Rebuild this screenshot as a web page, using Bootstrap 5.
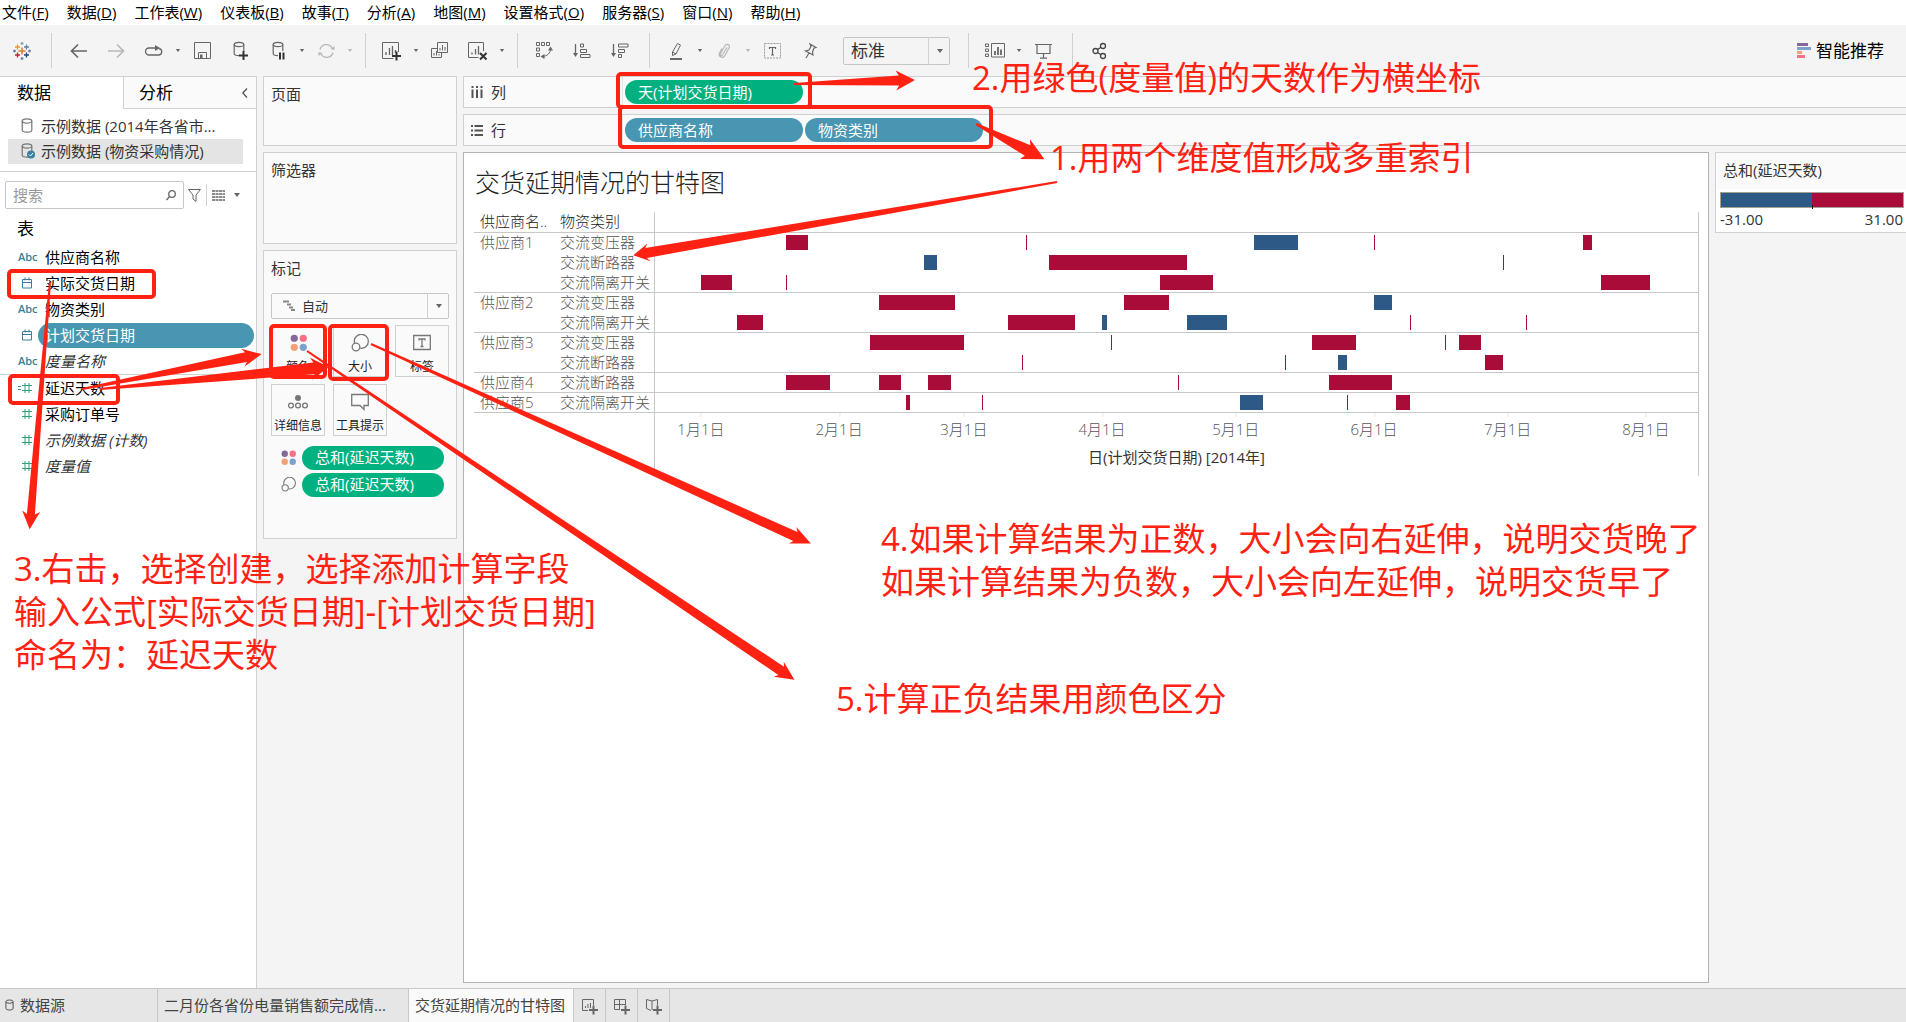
<!DOCTYPE html>
<html lang="zh-CN">
<head>
<meta charset="utf-8">
<meta name="viewport" content="width=device-width, initial-scale=1">
<title>交货延期情况的甘特图</title>
<link href="https://cdn.jsdelivr.net/npm/bootstrap@5.3.0/dist/css/bootstrap.min.css" rel="stylesheet">
<style>
:root{--ln:#d0d0d0;--blue:#4996b2;--green:#00b180;--red:#ff2112;--ic:#666}
body{font-family:"Open Sans","Noto Sans CJK SC",sans-serif;font-size:15px;line-height:24px;color:#333;background:#f4f4f4;height:100vh;position:relative;overflow:hidden}
svg{display:block;flex:none;overflow:visible}
button{background:none;border:0;padding:0;color:inherit}
.menubar{height:25px;padding-left:2px;gap:18px}
.menubar a{color:#000;text-decoration:none}
.toolstrip{height:51px;padding-left:3px;color:var(--ic)}
.tool{width:38px;height:32px;display:flex;align-items:center;justify-content:center}
.drop{width:10px;height:32px;display:flex;align-items:center;justify-content:center}
.faint{color:#b8b8b8}
.rule{width:1px;height:35px;background:var(--ln);margin:0 7px 0 10px}
.pick{appearance:none;background:transparent;border:1px solid #c6c6c6;color:#333;width:100%;border-radius:2px}
.pickwrap{position:relative}
.pickwrap .arrow{position:absolute;right:0;top:0;bottom:0;width:22px;border-left:1px solid var(--ln);display:flex;align-items:center;justify-content:center;pointer-events:none;color:var(--ic)}
.fit{width:107px;margin:0 8px 0 14px}
.fit .pick{height:28px;font-size:17px;line-height:24px;padding:0 7px}
.showme{color:#000;font-size:17px;gap:5px;padding-right:22px}
.side{width:257px;background:#fff;border-right:1px solid var(--ln);border-top:1px solid var(--ln)}
.side-tabs{height:32px;font-size:17px;color:#000}
.side-tabs button{text-align:left}
.tab-a{width:123px;padding-left:17px}
.tab-b{border-left:1px solid var(--ln);border-bottom:1px solid var(--ln);background:#fafafa;padding:0 8px 0 15px}
.sources{padding:5px 0 7px 8px;border-bottom:1px solid var(--ln)}
.src{height:25px;width:235px;padding:0 0 2px 13px;gap:8px;color:#333}
.src.on{background:#e4e4e4}
.src svg{color:#777}
.find{padding:9px 5px 0;color:var(--ic)}
.findbox{width:179px;height:28px;border:1px solid #c6c6c6;border-radius:2px;padding:0 7px}
.findbox input{border:0;outline:0;width:140px;padding:0;background:none}
.findbox input::placeholder{color:#999}
.split{width:1px;height:22px;background:var(--ln);margin:0 5px}
.tbl-head{font-size:17px;color:#000;padding-left:17px;margin:8px 0 0;line-height:24px;height:27px;font-weight:400}
.field{height:26px;color:#000;width:100%;padding-left:18px;text-align:left}
.field svg,.field .abc{width:18px;color:#3a7f9b;flex:none}
.abc{font-size:11px;font-weight:600;line-height:24px}
.field .nm{flex:1;padding-left:7px;margin:0 2px;height:25px;border-radius:13px;line-height:24px}
.field.on .nm{background:var(--blue);color:#fff}
.field.it .nm{font-style:italic;color:#333}
.field.num svg{color:#2f9e78}
.fieldline{border-top:1px solid var(--ln)}
.cards{width:206px;padding:0 6px;gap:6px}
.shelfcard{border:1px solid var(--ln);background:#fafafa;padding:5px 7px}
.shelfcard h2{font-size:15px;line-height:24px;margin:0;font-weight:400}
.c1{height:70px}.c2{height:92px}.c3{height:289px}
.marktype{margin-top:13px}
.marktype .pick{height:26px;font-size:13px;padding:0 30px}
.marktype .kind{position:absolute;left:12px;top:7px;pointer-events:none;color:#888}
.markgrid{display:grid;grid-template-columns:repeat(3,54px);justify-content:space-between;row-gap:7px;margin-top:6px}
.mbtn{height:52px;border:1px solid var(--ln);display:flex;flex-direction:column;align-items:center;justify-content:space-between;font-size:12px;line-height:18px;color:#222;padding-top:8px;white-space:nowrap}
.mbtn svg{color:#777}
.encs{margin-top:8px;padding-left:10px}
.enc{height:27px;gap:6px;color:#777}
.pilltag{height:24px;border-radius:12px;color:#fff;line-height:23px;padding-left:13px;text-align:left;background:var(--blue)}
.pilltag.g{background:var(--green)}
.enc .pilltag{width:142px}
.workarea,.workrow{min-width:0;min-height:0}
.shelf{height:32px;border:1px solid var(--ln);border-right:0;background:#fafafa;margin-bottom:6px}
.shelf .cap{width:159px;border-right:1px solid #e0e0e0;padding-left:7px;gap:8px;height:100%;color:#333}
.shelf .pilltag{width:178px}
.pills{gap:2px;padding-left:2px}
.sheet{background:#fff;border:1px solid #b3b3b3;padding:12px 9px 0 10px;margin-bottom:5px}
.sheet h1{font-size:25px;line-height:34px;font-weight:300;margin:0 0 13px 1px;color:#222}
.gantt{width:100%;table-layout:fixed;border-collapse:separate;border-spacing:0;font-weight:300;color:#555}
.gantt .w1{width:80px}.gantt .w2{width:100px}
.gantt th,.gantt td{padding:0 0 0 6px;font-weight:300;height:20px;line-height:19px;vertical-align:top;white-space:nowrap;text-align:left}
.gantt thead th{height:21px;color:#222;border-bottom:1px solid #c8c8c8}
.gantt .plot{border-left:1px solid #c8c8c8;border-right:1px solid #c8c8c8;position:relative;padding:0}
.gantt .end>*,.gantt th[scope=rowgroup]{border-bottom:1px solid #c8c8c8}
.bar{position:absolute;top:2px;height:15px;background:#a90c38;min-width:1px}
.bar.neg{background:#2c5985}
.gantt .axis td{height:63px}
.tick{position:absolute;top:0;padding-top:5px;transform:translateX(-50%);line-height:22px}
.tick::before{content:"";position:absolute;left:50%;top:0;height:4px;width:1px;background:#e4e4e4}
.axtitle{padding-top:32px;text-align:center;color:#333;line-height:24px;font-weight:400}
.legend-col{width:197px;padding-left:6px}
.legend{border:1px solid var(--ln);border-right:0;background:#fff;height:81px}
.legend h2{font-size:15px;font-weight:400;line-height:24px;padding:5px 0 7px 7px;margin:0;background:#fafafa}
.ramp{height:16px;margin:3px 2px 0 4px;border:1px solid #a49f93;background:linear-gradient(90deg,#2c5985 50%,#a90c38 50%);position:relative}
.ramp::after{content:"";position:absolute;left:50%;bottom:-2px;width:1px;height:4px;background:#000}
.ends{padding:0 3px 0 4px;line-height:22px}
.foot{height:34px;background:#e6e6e6;border-top:1px solid #c8c8c8;color:#444}
.foot button{border-right:1px solid #c8c8c8;text-align:left;padding:0 6px 1px}
.foot .ds{width:158px;padding-left:5px;gap:6px}
.foot .s1{width:251px}
.foot .s2{width:165px;background:#fafafa}
.foot .nw{width:32px;padding:3px 0 0 8px;color:#666}
.notes{position:absolute;inset:0;pointer-events:none;z-index:5}
.note{position:absolute;margin:0;color:var(--red);font-size:33px;line-height:43px;white-space:nowrap}
.n1{left:1050px;top:136px}.n2{left:972px;top:56px}.n3{left:14px;top:547px}.n4{left:881px;top:517px}.n5{left:836px;top:677px}
</style>
<script src="https://cdn.jsdelivr.net/npm/bootstrap@5.3.0/dist/js/bootstrap.bundle.min.js"></script>
</head>
<body class="d-flex flex-column">
<svg width="0" height="0" class="position-absolute" aria-hidden="true">
<symbol id="caret" viewBox="0 0 8 6"><path d="M1 1h6L4 5z" fill="currentColor"/></symbol>
<symbol id="cyl" viewBox="0 0 12 15"><g fill="none" stroke="currentColor" stroke-width="1.2"><ellipse cx="6" cy="3" rx="4.8" ry="2.2"/><path d="M1.2 3v9c0 1.2 2 2.2 4.8 2.2s4.800-1 4.800-2.200V3"/></g></symbol>
<symbol id="cal" viewBox="0 0 18 14"><path d="M4.500 3.500h9v8.500h-9zM4.500 6.500h9M7 1.500v3M11 1.500v3" fill="none" stroke="currentColor"/></symbol>
<symbol id="hash" viewBox="0 0 18 14"><path d="M4 4.500h10M4 9.500h10M7 2v10M11 2v10" fill="none" stroke="currentColor"/></symbol>
<symbol id="dots" viewBox="0 0 16 16"><circle cx="4" cy="4" r="3.400" fill="#86689a"/><circle cx="12.500" cy="4" r="3.400" fill="#fb6f86"/><circle cx="4" cy="12.500" r="3.400" fill="#f0a276"/><circle cx="12.500" cy="12.500" r="3.400" fill="#7ea2cb"/></symbol>
<symbol id="size" viewBox="0 0 18 18"><g fill="none" stroke="currentColor" stroke-width="1.300"><path d="M3.600 9.200a7 7 0 1 1 5.600 5"/><circle cx="5" cy="13" r="3.800"/></g></symbol>
</svg>

<nav class="menubar d-flex bg-white align-items-start" aria-label="菜单">
<a href="#">文件(<u>F</u>)</a><a href="#">数据(<u>D</u>)</a><a href="#">工作表(<u>W</u>)</a><a href="#">仪表板(<u>B</u>)</a><a href="#">故事(<u>T</u>)</a><a href="#">分析(<u>A</u>)</a><a href="#">地图(<u>M</u>)</a><a href="#">设置格式(<u>O</u>)</a><a href="#">服务器(<u>S</u>)</a><a href="#">窗口(<u>N</u>)</a><a href="#">帮助(<u>H</u>)</a>
</nav>

<div class="toolstrip d-flex align-items-center" role="toolbar" aria-label="工具栏">
<button class="tool" aria-label="Tableau"><svg width="18" height="18" viewBox="0 0 18 18" fill="none" stroke-width="1.300"><path d="M9 5.500v7M5.500 9h7" stroke="#e8762d" stroke-width="1.500"/><path d="M4.500 2.500v5M2 5h5" stroke="#e89540"/><path d="M13.500 2.500v5M11 5h5" stroke="#5b879b"/><path d="M4.500 10.500v5M2 13h5" stroke="#c72035"/><path d="M13.500 10.500v5M11 13h5" stroke="#1f457e"/><path d="M9 0v3M7.500 1.500h3" stroke="#7aa2b5"/><path d="M9 15v3M7.500 16.500h3M16.500 7.500v3M15 9h3M1.500 7.500v3M0 9h3" stroke="#7b7fae"/></svg></button>
<span class="rule"></span>
<button class="tool" aria-label="撤消"><svg width="17" height="16" fill="none" stroke="currentColor" stroke-width="1.700"><path d="M1 8h16M8 1.500L1.500 8 8 14.500"/></svg></button>
<button class="tool faint" aria-label="重做"><svg width="17" height="16" fill="none" stroke="currentColor" stroke-width="1.700"><path d="M0 8h16M9 1.500L15.500 8 9 14.500"/></svg></button>
<button class="tool" aria-label="恢复"><svg width="18" height="12" fill="none" stroke="currentColor" stroke-width="1.300"><path d="M5 10H4a3.500 3.500 0 0 1 0-7h9M14 3.500a3.300 3.300 0 0 1 0 6.500H4"/><path d="M10 0l5 3-5 3z" fill="currentColor" stroke="none"/></svg></button>
<button class="drop" aria-label="更多"><svg width="6" height="5"><use href="#caret"/></svg></button>
<button class="tool" aria-label="保存"><svg width="17" height="17" fill="none" stroke="currentColor"><path d="M.5.500h16v16H.5zM4.500 16v-5.500h8V16" /><path d="M6 12.500h2.500V16H6z" fill="currentColor" stroke="none"/></svg></button>
<button class="tool" aria-label="新建数据源"><svg width="15" height="19"><use href="#cyl" width="12" height="16"/><path d="M6 10h9v9H6z" fill="#f4f4f4"/><path d="M10.500 10v9M6 14.500h9" stroke="#333" stroke-width="2"/></svg></button>
<button class="tool" aria-label="暂停更新"><svg width="13" height="19"><use href="#cyl" width="12" height="16"/><path d="M6 10h9v9H6z" fill="#f4f4f4"/><path d="M8 11.500v7M11.500 11.500v7" stroke="#333" stroke-width="2"/></svg></button>
<button class="drop" aria-label="更多"><svg width="6" height="5"><use href="#caret"/></svg></button>
<button class="tool faint" aria-label="刷新"><svg width="17" height="16" fill="none" stroke="currentColor" stroke-width="1.300"><path d="M2 6.500a6.500 6.500 0 0 1 12-1.500M15 9.500a6.500 6.500 0 0 1-12 1.500"/><path d="M16.500 3v4l-4-1zM.500 13V9l4 1z" fill="currentColor" stroke="none"/></svg></button>
<button class="drop faint" aria-label="更多"><svg width="6" height="5"><use href="#caret"/></svg></button>
<span class="rule"></span>
<button class="tool" aria-label="新建工作表"><svg width="20" height="18" fill="none" stroke="currentColor"><path d="M16.500 10V.5H.5v16h11"/><path d="M4 13v-3M7.500 13V6M10.500 13V4M13.500 11V8" stroke-width="1.300"/><path d="M14.500 9.500v9M10 14h9" stroke="#333" stroke-width="2"/></svg></button>
<button class="drop" aria-label="更多"><svg width="6" height="5"><use href="#caret"/></svg></button>
<button class="tool" aria-label="复制"><svg width="18" height="17" fill="none" stroke="currentColor"><path d="M6.500.5h10v10h-10zM6.500 6.500h-6v9h10v-5M9 8.500V6M11.500 8.500V3M14 8.500V5M3 13.500V11M5.500 13.500V9M8 13.500V12"/></svg></button>
<button class="tool" aria-label="清除工作表"><svg width="20" height="18" fill="none" stroke="currentColor"><path d="M15.500 9V.5H.5v15h10"/><path d="M4 12.500v-2M7.500 12.500V7M10.500 12.500V4" stroke-width="1.300"/><path d="M12 11l6.500 6.500M18.500 11L12 17.500" stroke="#333" stroke-width="2"/></svg></button>
<button class="drop" aria-label="更多"><svg width="6" height="5"><use href="#caret"/></svg></button>
<span class="rule"></span>
<button class="tool" aria-label="交换行和列"><svg width="17" height="17" fill="none" stroke="currentColor"><path d="M.5.500h3v3h-3zM5.500.500h3v3h-3zM10.500.500h3v3h-3zM.5 6h3v3h-3zM.5 11.500h3v3h-3zM14.500 7c0 4-3 7-8 7.500"/><path d="M14.500 4.500l2.500 4h-5zM4.500 14.500l4-2.500v5z" fill="currentColor" stroke="none"/></svg></button>
<button class="tool" aria-label="升序"><svg width="18" height="16" fill="none" stroke="currentColor"><path d="M2.500 1v11" stroke-width="1.300"/><path d="M0 10h5l-2.500 4z" fill="currentColor" stroke="none"/><path d="M7.500 1h3v3h-3zM7.500 6.500h6v3h-6zM7.500 11.500h9.500v3H7.500z"/></svg></button>
<button class="tool" aria-label="降序"><svg width="18" height="16" fill="none" stroke="currentColor"><path d="M2.500 1v11" stroke-width="1.300"/><path d="M0 10h5l-2.500 4z" fill="currentColor" stroke="none"/><path d="M7.500 1h9.500v3H7.500zM7.500 6.500h6v3h-6zM7.500 11.500h3v3h-3z"/></svg></button>
<span class="rule"></span>
<button class="tool" aria-label="突出显示"><svg width="12" height="18" fill="none" stroke="currentColor"><path d="M2.500 10L7.500 1.500 10.500 3 6 12l-3.500 1.500zM2.500 10L6 12"/><path d="M0 17h12" stroke-width="2"/></svg></button>
<button class="drop" aria-label="更多"><svg width="6" height="5"><use href="#caret"/></svg></button>
<button class="tool faint" aria-label="分组"><svg width="13" height="16" fill="none" stroke="currentColor" stroke-width="1.200"><path d="M9 4.500L4.500 12c-1 1.500-3 .5-2-1.300L7 2.500c1.500-2.500 5.500-.5 4.200 2L7 12.500C5 16 0 14 1.500 10L4 5.500"/></svg></button>
<button class="drop faint" aria-label="更多"><svg width="6" height="5"><use href="#caret"/></svg></button>
<button class="tool" aria-label="显示标记标签"><svg width="17" height="16" fill="none" stroke="currentColor"><path d="M.5.500h16v14.500H.5z" stroke="#999" stroke-dasharray="2 1"/><path d="M5.500 6V4.500h6V6M8.500 4.500V12M7 12h3" stroke-width="1.200"/></svg></button>
<button class="tool" aria-label="固定轴"><svg width="13" height="16" fill="none" stroke="currentColor" stroke-width="1.200"><path d="M6 1l6 3.500-2 .5-1.500 4 .5 3L1.500 8 5 7l2-3.500zM5 10L2 15"/></svg></button>
<div class="pickwrap fit"><select class="pick" aria-label="适合"><option>标准</option></select><span class="arrow"><svg width="8" height="6"><use href="#caret"/></svg></span></div>
<span class="rule"></span>
<button class="tool" aria-label="显示/隐藏卡"><svg width="20" height="15" fill="none" stroke="currentColor"><path d="M.5 1h3v2.500h-3zM.5 6h3v2.500h-3zM.5 11h3v2.500h-3zM6.500.500h13v13.500h-13z"/><path d="M10 12V8M13 12V4M16 12V6.500" stroke-width="1.800"/></svg></button>
<button class="drop" aria-label="更多"><svg width="6" height="5"><use href="#caret"/></svg></button>
<button class="tool" aria-label="演示模式"><svg width="17" height="16" fill="none" stroke="currentColor" stroke-width="1.200"><path d="M0 1.500h17M2 1.500v9h13v-9M8.500 10.500V15M5 15.200h7"/></svg></button>
<span class="rule"></span>
<button class="tool" aria-label="共享"><svg width="15" height="16" fill="none" stroke="#444" stroke-width="1.300"><circle cx="3.500" cy="8" r="2.500"/><circle cx="11" cy="3" r="2.500"/><circle cx="11" cy="13" r="2.500"/><path d="M5.500 6.500l3.500-2.300M5.500 9.500L9 11.800"/></svg></button>
<button class="showme d-flex align-items-center ms-auto"><svg width="14" height="16"><path fill="#86689a" d="M0 0h11v3H0z"/><path fill="#7ea2cb" d="M0 4h14v3H0z"/><path fill="#f0a276" d="M0 8h5v3H0z"/><path fill="#fb6f86" d="M0 12h8v3H0z"/></svg>智能推荐</button>
</div>

<main class="d-flex flex-grow-1 workrow">
<aside class="side flex-shrink-0">
<div class="side-tabs d-flex"><button class="tab-a">数据</button><button class="tab-b flex-grow-1 d-flex align-items-center justify-content-between">分析<svg width="6" height="10" fill="none" stroke="#555" stroke-width="1.300"><path d="M5 .5L.8 5 5 9.500"/></svg></button></div>
<div class="sources">
<button class="src d-flex align-items-center"><svg width="12" height="15"><use href="#cyl"/></svg>示例数据 (2014年各省市...</button>
<button class="src on d-flex align-items-center"><svg width="12" height="15"><use href="#cyl"/><circle cx="10" cy="11.500" r="4" fill="#3a7f9b"/><path d="M8 11.500l1.500 1.500 2.500-3" fill="none" stroke="#fff"/></svg>示例数据 (物资采购情况)</button>
</div>
<div class="find d-flex align-items-center">
<div class="findbox d-flex align-items-center justify-content-between"><input type="text" placeholder="搜索" aria-label="搜索"><svg width="10" height="11" fill="none" stroke="currentColor" stroke-width="1.300"><circle cx="6" cy="4" r="3.300"/><path d="M3.600 6.500L.5 10"/></svg></div>
<button class="ms-1" aria-label="筛选"><svg width="13" height="13" fill="none" stroke="currentColor"><path d="M.5.500h12L8 6v6.500L5 10V6z"/></svg></button>
<span class="split"></span>
<button class="d-flex align-items-center gap-2" aria-label="查看方式"><svg width="13" height="11"><path d="M0 1h13M0 4h13M0 7h13M0 10h13" stroke="currentColor" stroke-width="1.500" stroke-dasharray="3 .5"/></svg><svg width="8" height="6"><use href="#caret"/></svg></button>
</div>
<h2 class="tbl-head">表</h2>
<button class="field d-flex align-items-center"><span class="abc">Abc</span><span class="nm">供应商名称</span></button>
<button class="field d-flex align-items-center"><svg width="18" height="14"><use href="#cal"/></svg><span class="nm">实际交货日期</span></button>
<button class="field d-flex align-items-center"><span class="abc">Abc</span><span class="nm">物资类别</span></button>
<button class="field on d-flex align-items-center"><svg width="18" height="14"><use href="#cal"/></svg><span class="nm">计划交货日期</span></button>
<button class="field it d-flex align-items-center"><span class="abc">Abc</span><span class="nm">度量名称</span></button>
<div class="fieldline"></div>
<button class="field num d-flex align-items-center"><svg width="18" height="14"><use href="#hash"/><path d="M0 5.500h3M0 8.500h3" stroke="currentColor"/></svg><span class="nm">延迟天数</span></button>
<button class="field num d-flex align-items-center"><svg width="18" height="14"><use href="#hash"/></svg><span class="nm">采购订单号</span></button>
<button class="field num it d-flex align-items-center"><svg width="18" height="14"><use href="#hash"/></svg><span class="nm">示例数据 (计数)</span></button>
<button class="field num it d-flex align-items-center"><svg width="18" height="14"><use href="#hash"/></svg><span class="nm">度量值</span></button>
</aside>

<div class="cards d-flex flex-column flex-shrink-0">
<section class="shelfcard c1"><h2>页面</h2></section>
<section class="shelfcard c2"><h2>筛选器</h2></section>
<section class="shelfcard c3"><h2>标记</h2>
<div class="pickwrap marktype"><select class="pick" aria-label="标记类型"><option>自动</option></select><svg class="kind" width="13" height="11" fill="none" stroke="currentColor" stroke-width="2"><path d="M0 1.500h6M4 4.500h4M6 7.500h4M8 10h4"/></svg><span class="arrow"><svg width="8" height="6"><use href="#caret"/></svg></span></div>
<div class="markgrid">
<button class="mbtn"><svg width="17" height="17"><use href="#dots"/></svg>颜色</button>
<button class="mbtn"><svg width="18" height="18"><use href="#size"/></svg>大小</button>
<button class="mbtn"><svg width="18" height="17" fill="none" stroke="currentColor" stroke-width="1.300"><path d="M.7 1.500h16.600v14H.7zM6 6.500V5h6v1.500M9 5v7.500M7.500 12.500h3"/></svg>标签</button>
<button class="mbtn"><svg width="20" height="17" fill="none" stroke="currentColor" stroke-width="1.300"><circle cx="10" cy="5" r="3" fill="currentColor" stroke="none"/><circle cx="3" cy="12.500" r="2.400"/><circle cx="10" cy="12.500" r="2.400"/><circle cx="17" cy="12.500" r="2.400"/></svg>详细信息</button>
<button class="mbtn"><svg width="18" height="17" fill="none" stroke="currentColor" stroke-width="1.300"><path d="M.7 1.500h16.600v11H13v4l-4-4H.7z"/></svg>工具提示</button>
</div>
<div class="encs">
<div class="enc d-flex align-items-center"><svg width="15" height="15"><use href="#dots"/></svg><button class="pilltag g">总和(延迟天数)</button></div>
<div class="enc d-flex align-items-center"><svg width="15" height="15"><use href="#size"/></svg><button class="pilltag g">总和(延迟天数)</button></div>
</div>
</section>
</div>

<div class="d-flex flex-column flex-grow-1 workarea">
<div class="shelf d-flex align-items-center flex-shrink-0"><div class="cap d-flex align-items-center"><svg width="12" height="12"><path d="M1.500 3.500V12M6 3.500V12M10.500 3.500V12M1.500 0v2M6 0v2M10.500 0v2" stroke="#555" stroke-width="2"/></svg>列</div><div class="pills d-flex"><button class="pilltag g">天(计划交货日期)</button></div></div>
<div class="shelf d-flex align-items-center flex-shrink-0"><div class="cap d-flex align-items-center"><svg width="12" height="11"><path d="M3.500 1H12M3.500 5.500H12M3.500 10H12M0 1h2M0 5.500h2M0 10h2" stroke="#555" stroke-width="1.800"/></svg>行</div><div class="pills d-flex"><button class="pilltag">供应商名称</button><button class="pilltag">物资类别</button></div></div>
<div class="d-flex flex-grow-1">
<section class="sheet flex-grow-1">
<h1>交货延期情况的甘特图</h1>
<table class="gantt">
<colgroup><col class="w1"><col class="w2"><col></colgroup>
<thead><tr><th>供应商名..</th><th>物资类别</th><th class="plot"></th></tr></thead>
<tbody id="rows"></tbody>
<tfoot><tr class="axis"><td></td><td></td><td class="plot" id="axis"><div class="axtitle">日(计划交货日期) [2014年]</div></td></tr></tfoot>
</table>
</section>
<aside class="legend-col flex-shrink-0"><div class="legend"><h2>总和(延迟天数)</h2><div class="ramp"></div><div class="ends d-flex justify-content-between"><span>-31.00</span><span>31.00</span></div></div></aside>
</div>
</div>
</main>

<footer class="foot d-flex flex-shrink-0">
<button class="ds d-flex align-items-center"><svg width="9" height="12"><use href="#cyl"/></svg>数据源</button>
<button class="s1">二月份各省份电量销售额完成情...</button>
<button class="s2">交货延期情况的甘特图</button>
<button class="nw" aria-label="新建工作表"><svg width="16" height="16" fill="none" stroke="currentColor"><path d="M11.500 6V.500H.5v11H6M3.500 9V7M6 9V5M8.500 9V4"/><path d="M11.500 6.500v9M7 11h9" stroke-width="2"/></svg></button>
<button class="nw" aria-label="新建仪表板"><svg width="16" height="16" fill="none" stroke="currentColor"><path d="M11.500 6V.500H.5v10H6M.5 5.500h11M5.500.500v10"/><path d="M11.500 6.500v9M7 11h9" stroke-width="2"/></svg></button>
<button class="nw" aria-label="新建故事"><svg width="16" height="16" fill="none" stroke="currentColor"><path d="M11.500 6V.500L6 2 .5.500v9L5 11.500M6 2v9"/><path d="M11.500 6.500v9M7 11h9" stroke-width="2"/></svg></button>
</footer>

<div class="notes">
<svg width="100%" height="100%" fill="#ff2112">
<g fill="none" stroke="#ff2112" stroke-width="4">
<rect x="9" y="271" width="145" height="26" rx="3"/><rect x="10" y="376" width="108" height="27" rx="3"/><rect x="271" y="326" width="54" height="51" rx="3"/><rect x="330" y="326" width="57" height="53" rx="3"/><rect x="618" y="74" width="192" height="33" rx="3"/><rect x="620" y="107" width="371" height="40" rx="3"/>
</g>
<path transform="translate(794 84) rotate(-1.900)" d="M0-1L105-5 102-10 121 0 102 10 105 5 0 1z"/>
<path transform="translate(976 124) rotate(27.200)" d="M0-1L58-6 55-11 77 0 55 11 58 6 0 1z"/>
<path transform="translate(1057 182) rotate(170.200)" d="M0-1L417-5 414-9 430 0 414 9 417 5 0 1z"/>
<path transform="translate(50 282) rotate(94.700)" d="M0-1L233-4 230-9 248 0 230 9 233 4 0 1z"/>
<path transform="translate(82 389) rotate(-11)" d="M0-1L167-5 164-9 183 0 164 9 167 5 0 1z"/>
<path transform="translate(100 389) rotate(-5.500)" d="M0-1L215-6 212-11 230 0 212 11 215 6 0 1z"/>
<path transform="translate(371 344) rotate(24.400)" d="M0-1L466-5 463-9 483 0 463 9 466 5 0 1z"/>
<path transform="translate(307 351) rotate(34)" d="M0-1L572-5 569-9 588 0 569 9 572 5 0 1z"/>
</svg>
<p class="note n1">1.用两个维度值形成多重索引</p>
<p class="note n2">2.用绿色(度量值)的天数作为横坐标</p>
<p class="note n3">3.右击，选择创建，选择添加计算字段<br>输入公式[实际交货日期]-[计划交货日期]<br>命名为：延迟天数</p>
<p class="note n4">4.如果计算结果为正数，大小会向右延伸，说明交货晚了<br>如果计算结果为负数，大小会向左延伸，说明交货早了</p>
<p class="note n5">5.计算正负结果用颜色区分</p>
</div>

<script>
// Each mark: [first day counted from 1 January, length in days, 1 when early]
const groups=[
["供应商1",[["交流变压器",[[19,5],[73,0],[124,10,1],[151,0],[198,2]]],["交流断路器",[[50,3,1],[78,31],[180,0]]],["交流隔离开关",[[0,7],[19,0],[103,12],[202,11]]]]],
["供应商2",[["交流变压器",[[40,17],[95,10],[151,4,1]]],["交流隔离开关",[[8,6],[69,15],[90,1,1],[109,9,1],[159,0],[185,0]]]]],
["供应商3",[["交流变压器",[[38,21],[92,0],[137,10],[167,0],[170,5]]],["交流断路器",[[72,0],[131,0],[143,2,1],[176,4]]]]],
["供应商4",[["交流断路器",[[19,10],[40,5],[51,5],[107,0],[141,14]]]]],
["供应商5",[["交流隔离开关",[[46,1],[63,0],[121,5,1],[145,0],[156,3]]]]]];
const first=-10.3,span=234,pc=d=>(d/span*100).toFixed(3)+"%";
let html="";
for(const [name,kinds] of groups)kinds.forEach(([kind,marks],i)=>{
 html+=`<tr class="${i==kinds.length-1?"end":""}">`+(i?"":`<th scope="rowgroup" rowspan="${kinds.length}">${name}</th>`)+`<td>${kind}</td><td class="plot">`+
 marks.map(([s,l,n])=>`<div class="bar${n?" neg":""}" style="left:${pc(s-first)};width:${pc(l)}"></div>`).join("")+"</td></tr>";
});
document.getElementById("rows").innerHTML=html;
document.getElementById("axis").insertAdjacentHTML("afterbegin",[0,31,59,90,120,151,181,212].map((d,i)=>`<span class="tick" style="left:${pc(d-first)}">${i+1}月1日</span>`).join(""));
</script>
</body>
</html>
